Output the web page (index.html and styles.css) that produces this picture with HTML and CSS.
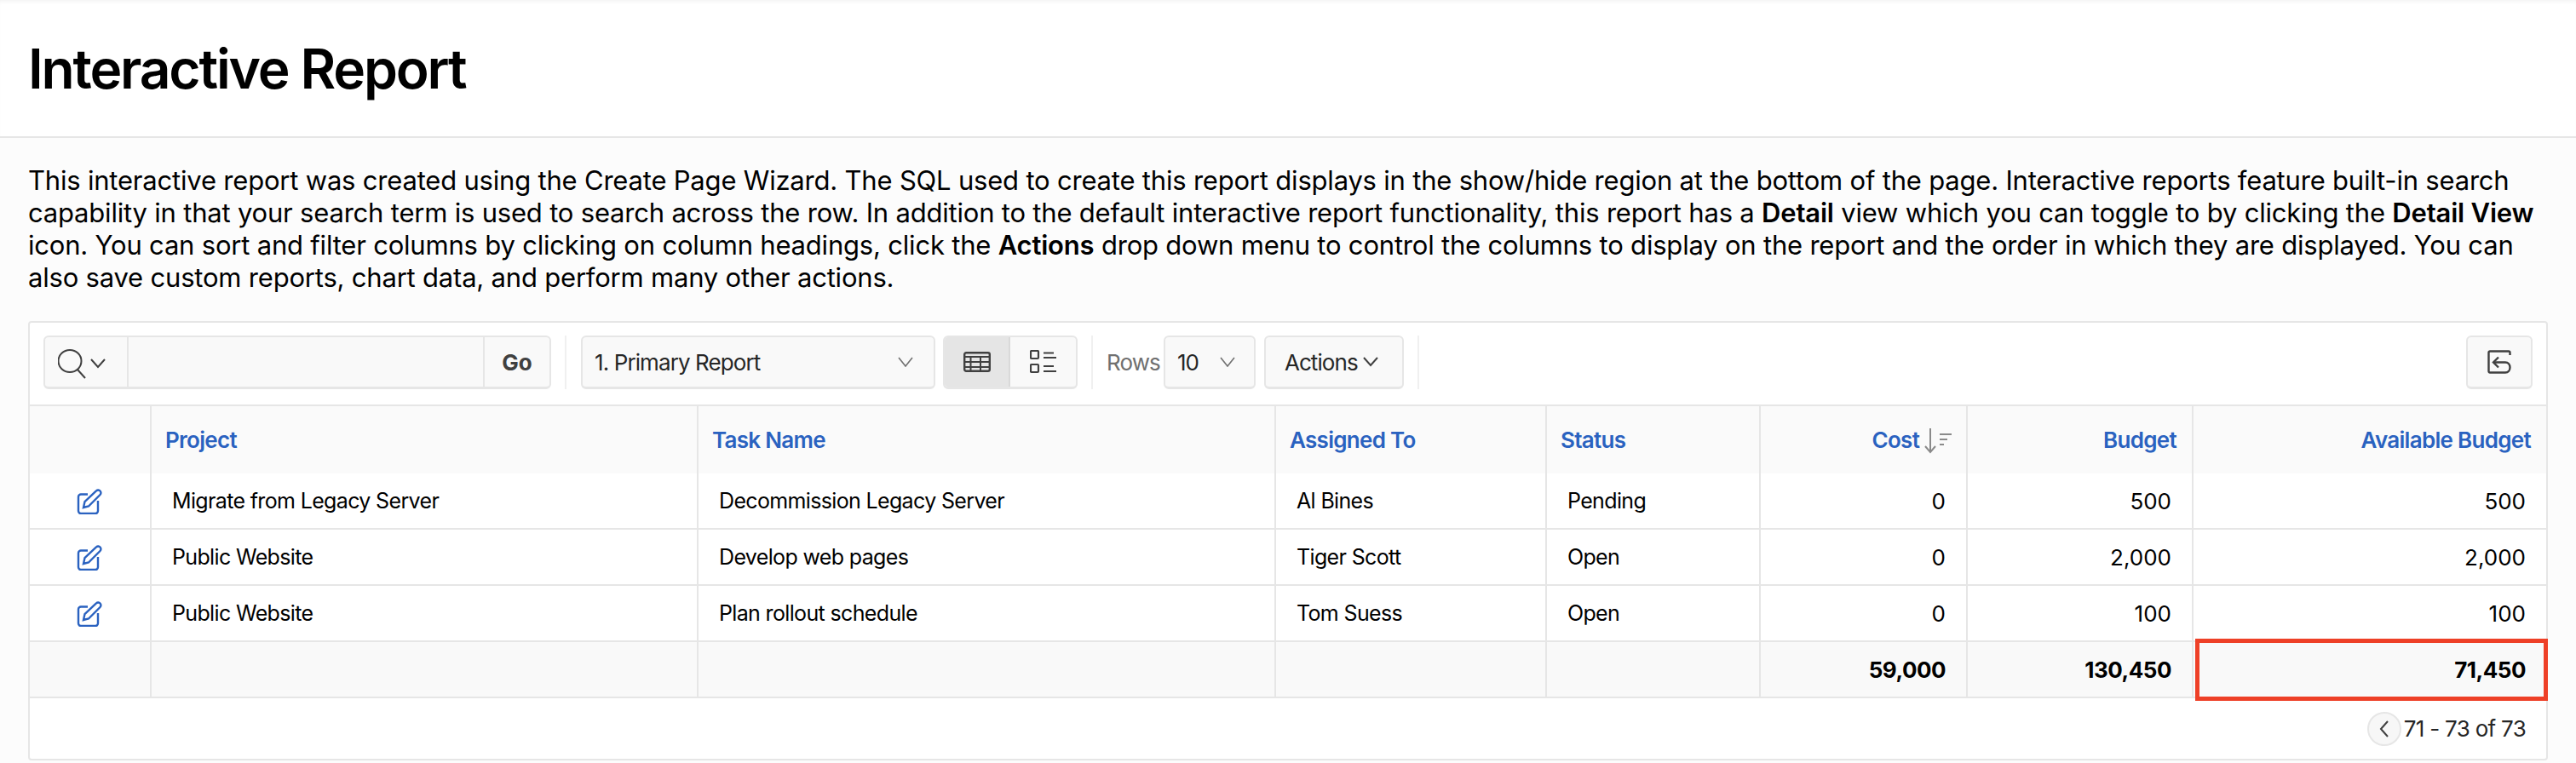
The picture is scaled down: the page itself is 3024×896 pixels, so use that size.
FILE: index.html
```html
<!DOCTYPE html>
<html lang="en">
<head>
  <meta charset="UTF-8" />
  <title>Interactive Report</title>
  <link rel="stylesheet" href="styles.css">
</head>
<body>

  <header class="page-title">
    <h1>Interactive Report</h1>
  </header>

  <main class="content">
    <p class="intro">This interactive report was created using the Create Page Wizard. The SQL used to create this report displays in the show/hide region at the bottom of the page. Interactive reports feature built-in search capability in that your search term is used to search across the row. In addition to the default interactive report functionality, this report has a <b>Detail</b> view which you can toggle to by clicking the <b>Detail View</b> icon. You can sort and filter columns by clicking on column headings, click the <b>Actions</b> drop down menu to control the columns to display on the report and the order in which they are displayed. You can also save custom reports, chart data, and perform many other actions.</p>

    <section class="report">
      <div class="toolbar">
        <div class="search control">
          <div class="search-menu">
            <svg class="icon-search" width="56" height="36" viewBox="0 0 56 36" fill="none" stroke="#404040" stroke-width="2">
              <ellipse cx="14" cy="14" rx="13.500" ry="13" />
              <path d="M23 24l9 10" />
              <path d="M39 12l8 9 8-9" />
            </svg>
          </div>
          <div class="search-input"></div>
          <div class="search-go">Go</div>
        </div>
        <span class="divider first"></span>
        <div class="report-select control">
          <span>1. Primary Report</span>
          <svg class="chev" width="18" height="12" viewBox="0 0 18 12" fill="none" stroke="#707070" stroke-width="1.6"><path d="M1 1l8 10 8-10" /></svg>
        </div>
        <div class="views control">
          <div class="view active">
            <svg width="32" height="24" viewBox="0 0 32 24" fill="none" stroke="#404040" stroke-width="2.400">
              <rect x="1.200" y="1.200" width="29.600" height="21.600" rx="2" />
              <path d="M1 6h30M1 12h30M1 18h30M8.500 6v17M20 6v17" stroke-width="2" />
            </svg>
          </div>
          <div class="view">
            <svg width="32" height="28" viewBox="0 0 32 28" fill="none" stroke="#404040" stroke-width="2.200">
              <rect x="1" y="1" width="9" height="9" rx="1" />
              <rect x="1" y="17" width="9" height="9" rx="1" />
              <path d="M16 3.500h12M16 9h15M16 19h12M16 25h15" />
            </svg>
          </div>
        </div>
        <span class="divider"></span>
        <span class="rows-label">Rows</span>
        <div class="rows-select control">
          <span>10</span>
          <svg class="chev" width="18" height="12" viewBox="0 0 18 12" fill="none" stroke="#707070" stroke-width="1.6"><path d="M1 1l8 10 8-10" /></svg>
        </div>
        <div class="actions control">
          <span>Actions</span>
          <svg width="18" height="12" viewBox="0 0 18 12" fill="none" stroke="#404040" stroke-width="2"><path d="M1 1l8 9 8-9" /></svg>
        </div>
        <span class="divider"></span>
        <div class="reset control">
          <svg width="28" height="28" viewBox="0 0 28 28" fill="none" stroke="#404040" stroke-width="2.400">
            <path d="M26.500 6V3a1.500 1.500 0 0 0-1.500-1.500H3A1.500 1.500 0 0 0 1.500 3v22A1.500 1.500 0 0 0 3 26.500h18c3.500 0 5.500-3 5.500-6s-2-6-5.500-6H8" />
            <path d="M13 8.500l-6 6 6 6" />
          </svg>
        </div>
      </div>

      <table class="grid">
        <colgroup>
          <col class="c-link"><col class="c-project"><col class="c-task"><col class="c-assigned"><col class="c-status"><col class="c-cost"><col class="c-budget"><col class="c-avail">
        </colgroup>
        <thead>
          <tr>
            <th></th>
            <th>Project</th>
            <th>Task Name</th>
            <th>Assigned To</th>
            <th>Status</th>
            <th class="num cost">Cost <svg class="sort" width="34" height="30" viewBox="0 0 34 30" fill="none" stroke="#8a8a8a" stroke-width="2"><path d="M7 0v28M1 21l6 7 6-7" /><path d="M18 7h14M18 13h9M18 19h5" /></svg></th>
            <th class="num">Budget</th>
            <th class="num">Available Budget</th>
          </tr>
        </thead>
        <tbody id="rows"></tbody>
        <tfoot>
          <tr>
            <td></td><td></td><td></td><td></td><td></td>
            <td class="num">59,000</td>
            <td class="num">130,450</td>
            <td class="num marked">71,450</td>
          </tr>
        </tfoot>
      </table>

      <div class="pager">
        <span class="prev">
          <svg width="12" height="20" viewBox="0 0 12 20" fill="none" stroke="#404040" stroke-width="2"><path d="M10 1l-8 9 8 9" /></svg>
        </span>
        <span>71 - 73 of 73</span>
      </div>
    </section>
  </main>

  <script>
    const rows = [
      ["Migrate from Legacy Server", "Decommission Legacy Server", "Al Bines", "Pending", "0", "500", "500"],
      ["Public Website", "Develop web pages", "Tiger Scott", "Open", "0", "2,000", "2,000"],
      ["Public Website", "Plan rollout schedule", "Tom Suess", "Open", "0", "100", "100"]
    ];

    const editIcon = `<svg width="30" height="30" viewBox="0 0 30 30" fill="none" stroke="#2a62c0" stroke-width="2.400">
      <path d="M13 6.500H5a3 3 0 0 0-3 3v16.500a3 3 0 0 0 3 3h17a3 3 0 0 0 3-3V14" />
      <path d="M8 22l1.500-7L23 2.500c1.500-1.500 3.500-1 4.500 0s1.500 3 0 4.500L14 20.500z" />
    </svg>`;

    const body = document.getElementById("rows");
    rows.forEach((r) => {
      const tr = document.createElement("tr");
      let html = `<td class="edit">${editIcon}</td>`;
      r.forEach((val, i) => {
        html += `<td class="${i > 3 ? "num" : ""}">${val}</td>`;
      });
      tr.innerHTML = html;
      body.appendChild(tr);
    });
  </script>

</body>
</html>
```

FILE: styles.css
```css
* {
  box-sizing: border-box;
}

body {
  margin: 0;
  font-family: Inter, "Liberation Sans", sans-serif;
  background: #fcfcfc;
  color: #000;
}

.page-title {
  height: 162px;
  padding: 0 33px;
  display: flex;
  align-items: center;
  background: #fff;
  border-bottom: 2px solid #e6e6e6;
  box-shadow: inset 0 4px 4px -2px rgba(0, 0, 0, 0.05);
}

.page-title h1 {
  margin: 0;
  font-size: 64px;
  font-weight: 600;
  letter-spacing: -2.15px;
}

.content {
  padding: 31px 33px 0;
}

.intro {
  margin: 0 0 32px;
  font-size: 31px;
  line-height: 38px;
  letter-spacing: -0.2px;
}

.intro b {
  font-weight: 600;
}

.report {
  background: #fff;
  border: 2px solid #e6e6e6;
  border-radius: 4px;
}

.toolbar {
  display: flex;
  align-items: stretch;
  height: 96px;
  padding: 15px 16px 18px;
  font-size: 26px;
  letter-spacing: -0.9px;
  color: #262626;
}

.control {
  display: flex;
  align-items: center;
  background: #f9f9f9;
  border: 2px solid #e6e6e6;
  border-bottom-width: 3px;
  border-radius: 6px;
}

.divider {
  width: 2px;
  margin: 0 16px;
  background: #f0f0f0;
}

.divider.first {
  margin-right: 17px;
}

.search {
  width: 596px;
}

.search-menu {
  width: 98px;
  height: 100%;
  padding: 14px 0 0 15px;
  border-right: 2px solid #e6e6e6;
}

.icon-search {
  display: block;
}

.search-input {
  flex: 1;
}

.search-go {
  width: 78px;
  height: 100%;
  display: flex;
  align-items: center;
  justify-content: center;
  border-left: 2px solid #e6e6e6;
  font-weight: 700;
  letter-spacing: 0;
  color: #404040;
}

.report-select {
  width: 416px;
  justify-content: space-between;
  padding: 0 24px 0 14px;
}

.views {
  width: 158px;
  margin-left: 9px;
  overflow: hidden;
}

.view {
  flex: 1;
  height: 100%;
  display: flex;
  align-items: center;
  justify-content: center;
}

.view.active {
  flex: none;
  width: 77px;
  background: #e5e5e5;
  border-right: 2px solid #d9d9d9;
}

.rows-label {
  align-self: center;
  margin-right: 4px;
  color: #707070;
}

.rows-select {
  width: 108px;
  justify-content: space-between;
  padding: 0 22px 0 14px;
}

.actions {
  width: 164px;
  margin-left: 10px;
  padding-left: 22px;
  gap: 6px;
}

.reset {
  width: 78px;
  margin-left: auto;
  justify-content: center;
}

.grid {
  width: 100%;
  table-layout: fixed;
  border-collapse: separate;
  border-spacing: 0;
  font-size: 25px;
  letter-spacing: -0.65px;
}

.c-link { width: 143px; }
.c-project { width: 642px; }
.c-task { width: 678px; }
.c-assigned { width: 318px; }
.c-status { width: 251px; }
.c-cost { width: 243px; }
.c-budget { width: 265px; }
.c-avail { width: 414px; }

.grid th {
  height: 81px;
  padding: 0 18px 0 16px;
  background: #fafafa;
  border-top: 2px solid #e6e6e6;
  border-right: 2px solid #e6e6e6;
  text-align: left;
  font-size: 26px;
  font-weight: 600;
  letter-spacing: -0.7px;
  color: #2a62c0;
  white-space: nowrap;
}

.grid td {
  height: 66px;
  padding: 0 24px;
  border-right: 2px solid #e6e6e6;
  border-bottom: 2px solid #e6e6e6;
}

.grid th:last-child,
.grid td:last-child {
  border-right: none;
}

.grid th.num,
.grid td.num {
  text-align: right;
}

.grid td.num {
  font-size: 26px;
  letter-spacing: 0;
}

.grid th.cost {
  padding-right: 15px;
}

.grid td.edit {
  padding: 2px 0 0 55px;
}

.grid td.edit svg {
  display: block;
}

.sort {
  vertical-align: -7px;
}

.grid tfoot td {
  background: #f9f9f9;
  font-weight: 700;
}

.grid tfoot td.num {
  letter-spacing: -0.5px;
}

.marked {
  position: relative;
}

/* red callout drawn over the total */
.marked::after {
  content: "";
  position: absolute;
  top: -4px;
  left: 2px;
  right: -2px;
  bottom: -5px;
  border: 5px solid #ee4027;
}

.pager {
  height: 71px;
  display: flex;
  align-items: center;
  justify-content: flex-end;
  gap: 3px;
  padding: 0 24px 0 0;
  font-size: 26px;
  letter-spacing: -0.7px;
  color: #262626;
}

.prev {
  width: 40px;
  height: 40px;
  display: flex;
  align-items: center;
  justify-content: center;
  background: #f7f7f7;
  border: 2px solid #e6e6e6;
  border-radius: 50%;
}
```
